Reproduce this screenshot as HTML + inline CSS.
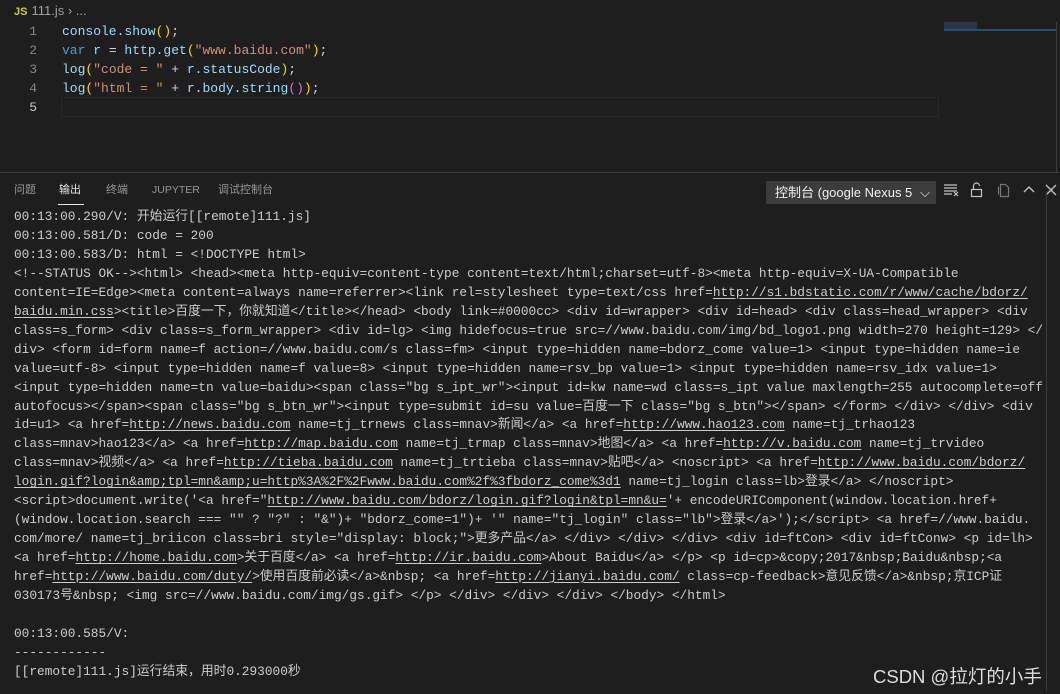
<!DOCTYPE html>
<html><head><meta charset="utf-8"><style>
body{margin:0;width:1060px;height:693px;background:#1e1e1e;overflow:hidden;font-family:"Liberation Sans","Noto Sans CJK SC",sans-serif;color:#ccc;position:relative}
.mono{font-family:"Liberation Mono","Noto Sans CJK SC",monospace}
#crumb{position:absolute;left:14px;top:3px;font-size:13px;color:#a0a0a0}
#crumb b{color:#cbcb41;font-size:11px;margin-right:4px}
.code{position:absolute;left:0;top:22px;font-size:13px;line-height:19px}
.ln{position:absolute;left:0;width:37px;text-align:right;color:#858585}
.cl{position:absolute;left:62px;white-space:pre;color:#9cdcfe}
.k{color:#569cd6}.s{color:#ce9178}.p{color:#ffd700}.q{color:#da70d6}.w{color:#d4d4d4}.f{color:#dcdcaa}
#cur{position:absolute;left:61px;top:97px;width:876px;height:18px;border:1px solid #282828}
#panel{position:absolute;left:0;top:172px;width:1060px;height:521px;border-top:1px solid #3c3c3c}
.tabs{position:absolute;top:10px;left:14px;font-size:11px;line-height:14px;color:#969696}
.tabs span{position:absolute;top:0;white-space:nowrap}
#out{position:absolute;left:14px;top:35px;font-size:12.8px;line-height:18.96px;white-space:pre;color:#cccccc}
#out u{text-decoration:underline;text-underline-offset:2px}
#sel{position:absolute;left:766px;top:8px;width:170px;height:23px;background:#3c3c3c;color:#f0f0f0;font-size:13px;line-height:23px;padding-left:9px;box-sizing:border-box;white-space:nowrap;overflow:hidden}
.ic{position:absolute;top:8px}
#wm{position:absolute;left:873px;top:663px;font-size:18.5px;color:#ddd;white-space:nowrap}
</style></head><body>
<div id="crumb"><b>JS</b>111.js › ...</div>
<div class="code mono">
<div class="ln" style="top:0">1</div><div class="cl" style="top:0">console.show<span class="p">()</span><span class="w">;</span></div>
<div class="ln" style="top:19px">2</div><div class="cl" style="top:19px"><span class="k">var</span> r <span class="w">=</span> http.get<span class="p">(</span><span class="s">"www.baidu.com"</span><span class="p">)</span><span class="w">;</span></div>
<div class="ln" style="top:38px">3</div><div class="cl" style="top:38px">log<span class="p">(</span><span class="s">"code = "</span> <span class="w">+</span> r.statusCode<span class="p">)</span><span class="w">;</span></div>
<div class="ln" style="top:57px">4</div><div class="cl" style="top:57px">log<span class="p">(</span><span class="s">"html = "</span> <span class="w">+</span> r.body.string<span class="q">()</span><span class="p">)</span><span class="w">;</span></div>
<div class="ln" style="top:76px;color:#c6c6c6">5</div>
</div>
<div id="cur"></div>
<div style="position:absolute;left:944px;top:22px;width:33px;height:9px;background:#2a3b4f;opacity:.8"></div>
<div style="position:absolute;left:944px;top:29px;width:112px;height:2px;background:#264f78"></div>
<div style="position:absolute;left:1056px;top:22px;width:1px;height:150px;background:#3c3c3c"></div>
<div id="panel">
<div class="tabs"><span style="left:0">问题</span><span style="left:45px;color:#e7e7e7">输出</span><span style="left:92px">终端</span><span style="left:138px;font-size:10.5px">JUPYTER</span><span style="left:204px">调试控制台</span></div>
<div style="position:absolute;left:58px;top:31px;width:26px;height:1px;background:#e7e7e7"></div>
<div id="sel">控制台 (google Nexus 5 <span style="position:absolute;right:6px;top:0;background:#3c3c3c;padding-left:3px">⌵</span></div>
<svg class="ic" style="left:942px" width="18" height="18" viewBox="0 0 18 18" fill="none" stroke="#c5c5c5" stroke-width="1.2"><path d="M2 4h13M2 7h13M2 10h13M2 13h8M12 11l4 4M16 11l-4 4"/></svg>
<svg class="ic" style="left:968px" width="18" height="18" viewBox="0 0 18 18" fill="none" stroke="#c5c5c5" stroke-width="1.2"><rect x="3.5" y="8.5" width="10" height="7"/><path d="M5.5 8.5V5a3 3 0 0 1 6 0"/></svg>
<svg class="ic" style="left:995px" width="18" height="18" viewBox="0 0 18 18" fill="none" stroke="#777" stroke-width="1.2"><path d="M5.5 3.5h5l3 3v9h-8zM3.5 5.5v8"/></svg>
<svg class="ic" style="left:1020px" width="18" height="18" viewBox="0 0 18 18" fill="none" stroke="#c5c5c5" stroke-width="1.3"><path d="M4 11l5-5 5 5"/></svg>
<svg class="ic" style="left:1042px" width="18" height="18" viewBox="0 0 18 18" fill="none" stroke="#c5c5c5" stroke-width="1.3"><path d="M4 4l10 10M14 4L4 14"/></svg>
<div id="out" class="mono">00:13:00.290/V: 开始运行[[remote]111.js]
00:13:00.581/D: code = 200
00:13:00.583/D: html = &lt;!DOCTYPE html&gt;
&lt;!--STATUS OK--&gt;&lt;html&gt; &lt;head&gt;&lt;meta http-equiv=content-type content=text/html;charset=utf-8&gt;&lt;meta http-equiv=X-UA-Compatible
content=IE=Edge&gt;&lt;meta content=always name=referrer&gt;&lt;link rel=stylesheet type=text/css href=<u>http://s1.bdstatic.com/r/www/cache/bdorz/</u>
<u>baidu.min.css</u>&gt;&lt;title&gt;百度一下，你就知道&lt;/title&gt;&lt;/head&gt; &lt;body link=#0000cc&gt; &lt;div id=wrapper&gt; &lt;div id=head&gt; &lt;div class=head_wrapper&gt; &lt;div
class=s_form&gt; &lt;div class=s_form_wrapper&gt; &lt;div id=lg&gt; &lt;img hidefocus=true src=//www.baidu.com/img/bd_logo1.png width=270 height=129&gt; &lt;/
div&gt; &lt;form id=form name=f action=//www.baidu.com/s class=fm&gt; &lt;input type=hidden name=bdorz_come value=1&gt; &lt;input type=hidden name=ie
value=utf-8&gt; &lt;input type=hidden name=f value=8&gt; &lt;input type=hidden name=rsv_bp value=1&gt; &lt;input type=hidden name=rsv_idx value=1&gt;
&lt;input type=hidden name=tn value=baidu&gt;&lt;span class="bg s_ipt_wr"&gt;&lt;input id=kw name=wd class=s_ipt value maxlength=255 autocomplete=off
autofocus&gt;&lt;/span&gt;&lt;span class="bg s_btn_wr"&gt;&lt;input type=submit id=su value=百度一下 class="bg s_btn"&gt;&lt;/span&gt; &lt;/form&gt; &lt;/div&gt; &lt;/div&gt; &lt;div
id=u1&gt; &lt;a href=<u>http://news.baidu.com</u> name=tj_trnews class=mnav&gt;新闻&lt;/a&gt; &lt;a href=<u>http://www.hao123.com</u> name=tj_trhao123
class=mnav&gt;hao123&lt;/a&gt; &lt;a href=<u>http://map.baidu.com</u> name=tj_trmap class=mnav&gt;地图&lt;/a&gt; &lt;a href=<u>http://v.baidu.com</u> name=tj_trvideo
class=mnav&gt;视频&lt;/a&gt; &lt;a href=<u>http://tieba.baidu.com</u> name=tj_trtieba class=mnav&gt;贴吧&lt;/a&gt; &lt;noscript&gt; &lt;a href=<u>http://www.baidu.com/bdorz/</u>
<u>login.gif?login&amp;amp;tpl=mn&amp;amp;u=http%3A%2F%2Fwww.baidu.com%2f%3fbdorz_come%3d1</u> name=tj_login class=lb&gt;登录&lt;/a&gt; &lt;/noscript&gt;
&lt;script&gt;document.write('&lt;a href="<u>http://www.baidu.com/bdorz/login.gif?login&amp;tpl=mn&amp;u=</u>'+ encodeURIComponent(window.location.href+
(window.location.search === "" ? "?" : "&amp;")+ "bdorz_come=1")+ '" name="tj_login" class="lb"&gt;登录&lt;/a&gt;');&lt;/script&gt; &lt;a href=//www.baidu.
com/more/ name=tj_briicon class=bri style="display: block;"&gt;更多产品&lt;/a&gt; &lt;/div&gt; &lt;/div&gt; &lt;/div&gt; &lt;div id=ftCon&gt; &lt;div id=ftConw&gt; &lt;p id=lh&gt;
&lt;a href=<u>http://home.baidu.com</u>&gt;关于百度&lt;/a&gt; &lt;a href=<u>http://ir.baidu.com</u>&gt;About Baidu&lt;/a&gt; &lt;/p&gt; &lt;p id=cp&gt;&amp;copy;2017&amp;nbsp;Baidu&amp;nbsp;&lt;a
href=<u>http://www.baidu.com/duty/</u>&gt;使用百度前必读&lt;/a&gt;&amp;nbsp; &lt;a href=<u>http://jianyi.baidu.com/</u> class=cp-feedback&gt;意见反馈&lt;/a&gt;&amp;nbsp;京ICP证
030173号&amp;nbsp; &lt;img src=//www.baidu.com/img/gs.gif&gt; &lt;/p&gt; &lt;/div&gt; &lt;/div&gt; &lt;/div&gt; &lt;/body&gt; &lt;/html&gt;

00:13:00.585/V:
------------
[[remote]111.js]运行结束，用时0.293000秒</div>
<div style="position:absolute;left:1046px;top:18px;width:1px;height:500px;background:#3c3c3c"></div>
</div>
<div id="wm">CSDN @拉灯的小手</div>
</body></html>
